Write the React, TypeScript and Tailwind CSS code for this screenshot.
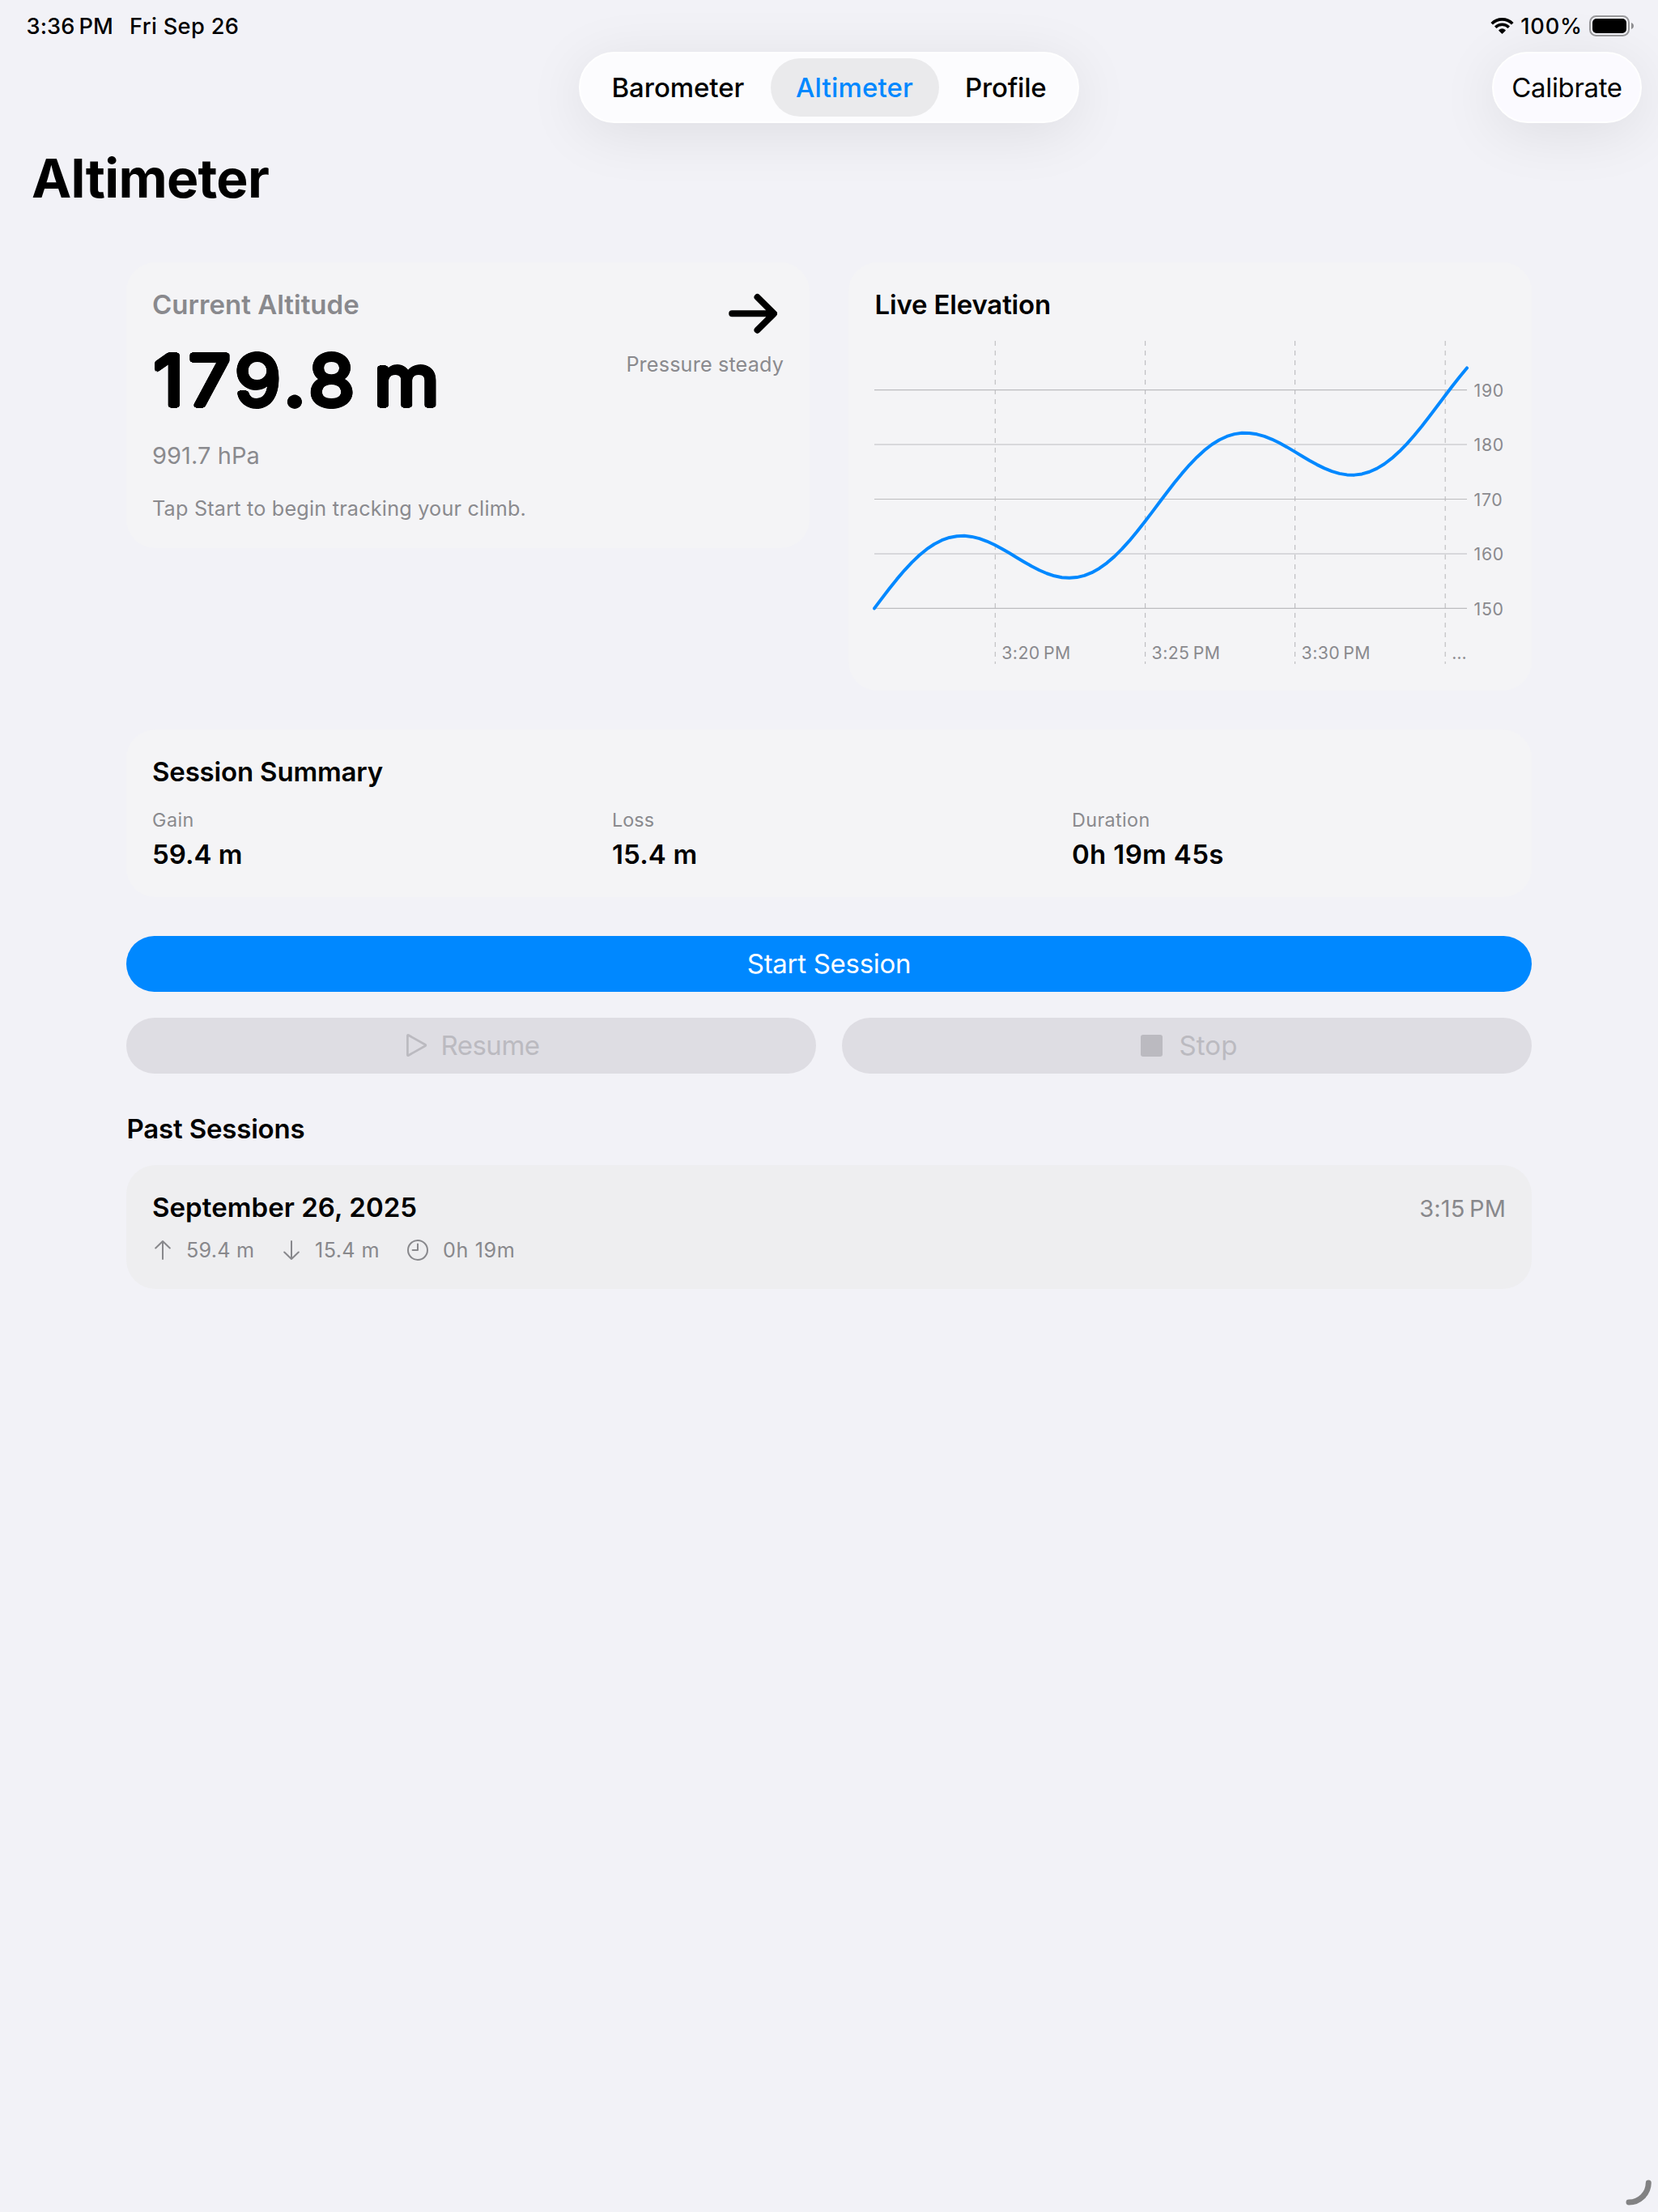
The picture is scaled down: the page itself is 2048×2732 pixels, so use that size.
import type { ReactNode } from "react";

/* Elevation samples, one every 15 seconds of the session. */
const SAMPLES = Array.from({ length: 80 }, (_, i) => 150 + 0.5 * i + 8 * Math.sin(i / 6));
const PLOT_W = 732;
const yFor = (v: number) => 330.4 - (v - 150) * 6.745;
const CURVE = SAMPLES.map(
  (v, i) => `${i ? "L" : "M"}${((i * PLOT_W) / 79).toFixed(2)} ${yFor(v).toFixed(2)}`,
).join(" ");

const TIME_TICKS: [number, string][] = [
  [149.3, "3:20\u202fPM"],
  [334.6, "3:25\u202fPM"],
  [519.6, "3:30\u202fPM"],
  [705.2, "…"],
];

function WifiIcon() {
  return (
    <svg width="29" height="20" viewBox="0 0 29 20" fill="none" stroke="#000">
      <path d="M1.7 7.2A18.2 18.2 0 0 1 27.3 7.2" strokeWidth="3.7" />
      <path d="M6.2 11.7A12 12 0 0 1 22.8 11.7" strokeWidth="3.5" />
      <path d="M14.5 19 L10.9 15.4 A5.3 5.3 0 0 1 18.1 15.4 Z" fill="#000" strokeWidth="1.4" strokeLinejoin="round" />
    </svg>
  );
}

function BatteryIcon() {
  return (
    <svg width="55" height="26" viewBox="0 0 55 26" fill="none">
      <rect x="1" y="1" width="48" height="24" rx="7.5" stroke="#99999c" strokeWidth="2" />
      <rect x="4" y="4" width="42" height="18" rx="5" fill="#000" />
      <path d="M52 9c1.9.7 3 2.2 3 4s-1.100 3.300-3 4z" fill="#8e8e91" />
    </svg>
  );
}

function StatusBar() {
  return (
    <div className="flex h-16 items-center justify-between pl-[32.5px] pr-[30px] text-[27.2px] font-medium">
      <div className="flex items-center pt-0.5">
        <span className="tracking-[0.15px]">3:36{"\u202f"}PM</span>
        <span className="ml-5 tracking-[0.35px]">Fri Sep 26</span>
      </div>
      <div className="flex items-center">
        <WifiIcon />
        <span className="ml-2 mr-2 pt-0.5 tracking-[0.87px]">100%</span>
        <BatteryIcon />
      </div>
    </div>
  );
}

function NavBar() {
  return (
    <div className="grid h-[88px] grid-cols-[1fr_auto_1fr] px-5 text-[33px]">
      <div />
      <div className="flex items-stretch rounded-full border-2 border-white bg-[#fcfcfe] p-1.5 font-medium shadow-[0_12px_72px_rgba(0,0,0,0.085)]">
        <div className="flex w-[229px] items-center pt-0.5 pl-[32.5px] tracking-[-0.05px]">Barometer</div>
        <div className="flex w-[208px] items-center justify-center rounded-full bg-[#eaeaec] pt-0.5 pr-px tracking-[0.18px] text-[#0088ff]">
          Altimeter
        </div>
        <div className="flex w-[165px] items-center pt-0.5 pl-8 tracking-[-0.2px]">Profile</div>
      </div>
      <div className="flex w-[185px] items-center justify-center justify-self-end rounded-full border-2 border-white bg-[#fbfaff] pt-0.5 tracking-[-0.35px] shadow-[0_12px_72px_rgba(0,0,0,0.085)]">
        Calibrate
      </div>
    </div>
  );
}

function CurrentAltitudeCard() {
  return (
    <section className="flex h-[353px] justify-between self-start rounded-[36px] bg-[#f4f4f6] p-8">
      <div>
        <h2 className="text-[33px] leading-[41px] font-semibold tracking-[0.02px] text-[#89898d]">Current Altitude</h2>
        <div className="mt-4 flex origin-left scale-x-[1.06] pl-[1.5px] text-[87px] leading-[114px] [text-shadow:2.7px_0_#000,2.49px_1.03px_#000,1.91px_1.91px_#000,1.03px_2.49px_#000,0_2.7px_#000,-1.03px_2.49px_#000,-1.91px_1.91px_#000,-2.49px_1.03px_#000,-2.7px_0_#000,-2.49px_-1.03px_#000,-1.91px_-1.91px_#000,-1.03px_-2.49px_#000,0_-2.7px_#000,1.03px_-2.49px_#000,1.91px_-1.91px_#000,2.49px_-1.03px_#000]">
          <span className="tracking-[5.4px]">
            179<span className="-ml-0.5 tracking-[3.6px]">.</span>8
          </span>
          <span className="ml-[17px]">m</span>
        </div>
        <p className="mt-[18px] text-[29px] leading-9 tracking-[0.07px] text-[#8a8a8e]">991.7 hPa</p>
        <p className="mt-8 text-[25.2px] leading-[31px] tracking-[0.21px] text-[#8a8a8e]">
          Tap Start to begin tracking your climb.
        </p>
      </div>
      <div className="flex flex-col items-end">
        <svg
          className="mt-1.5 mr-2"
          width="60"
          height="50"
          viewBox="0 0 60 50"
          fill="none"
          stroke="#000"
          strokeWidth="8"
          strokeLinecap="round"
          strokeLinejoin="round"
        >
          <path d="M4.200 25.300H55M35.500 5L56 25.300L35.500 45.700" />
        </svg>
        <p className="mt-[23px] text-[25.2px] leading-[31px] tracking-[0.16px] text-[#8a8a8e]">Pressure steady</p>
      </div>
    </section>
  );
}

function ElevationCard() {
  return (
    <section className="h-[529px] rounded-[36px] bg-[#f4f4f6] p-8">
      <h2 className="pl-[0.5px] text-[33px] leading-[41px] font-semibold tracking-[-0.18px]">Live Elevation</h2>
      <svg className="mt-6 overflow-visible" width="780" height="400" viewBox="0 0 780 400">
        {[150, 160, 170, 180, 190].map((v) => (
          <g key={v}>
            <line x1="0" x2={PLOT_W} y1={yFor(v)} y2={yFor(v)} stroke="#bcbcbf" strokeWidth="1.1" />
            <text x="740.6" y={yFor(v) + 8.3} fontSize="21.3" letterSpacing="0.65" fill="#8a8a8e">
              {v}
            </text>
          </g>
        ))}
        {TIME_TICKS.map(([x, label]) => (
          <g key={label}>
            <line x1={x} x2={x} y1="0" y2="399" stroke="#bcbcbf" strokeWidth="1.1" strokeDasharray="6 6" />
            <text x={x + 8} y="393" fontSize="21.3" letterSpacing="0.4" fill="#8a8a8e">
              {label}
            </text>
          </g>
        ))}
        <path d={CURVE} fill="none" stroke="#0088ff" strokeWidth="4" strokeLinecap="round" strokeLinejoin="round" />
      </svg>
    </section>
  );
}

function Stat({ label, children }: { label: ReactNode; children: ReactNode }) {
  return (
    <div>
      <div className="text-[23.3px] leading-7 text-[#8a8a8e]">{label}</div>
      <div className="mt-2 text-[33px] leading-[41px] font-semibold">{children}</div>
    </div>
  );
}

function SummaryCard() {
  return (
    <section className="mt-12 h-[207px] rounded-[36px] bg-[#f4f4f6] p-8">
      <h2 className="text-[33px] leading-[41px] font-semibold tracking-[-0.17px]">Session Summary</h2>
      <div className="mt-[25px] grid grid-cols-3 gap-8">
        <Stat label={<span className="tracking-[0.5px]">Gain</span>}>59.4 m</Stat>
        <Stat label={<span className="tracking-[0.1px]">Loss</span>}>
          <span className="tracking-[0.15px]">15.4 m</span>
        </Stat>
        <Stat label={<span className="tracking-[0.4px]">Duration</span>}>
          <span className="tracking-[0.35px]">0h 19m 45s</span>
        </Stat>
      </div>
    </section>
  );
}

function SessionControls() {
  return (
    <div className="mt-12 text-[33px] leading-[41px]">
      <button className="flex h-[69px] w-full items-center justify-center rounded-full bg-[#0088ff] pb-px tracking-[-0.3px] text-white">
        Start Session
      </button>
      <div className="mt-8 grid grid-cols-2 gap-8 text-[#bbbac0]">
        <button className="flex h-[69px] items-center justify-center rounded-full bg-[#dedde3] pb-px pl-1">
          <svg width="27" height="30" viewBox="0 0 27 30" fill="none" stroke="currentColor" strokeWidth="2.7" strokeLinejoin="round">
            <path d="M2.400 3.100Q2.400 1.900 3.500 2.500L24.300 14.200Q25.400 15 24.300 15.800L3.500 27.500Q2.400 28.100 2.400 26.900Z" />
          </svg>
          <span className="ml-4 tracking-[-0.5px]">Resume</span>
        </button>
        <button className="flex h-[69px] items-center justify-center rounded-full bg-[#dedde3] pb-px pl-[5px]">
          <span className="size-[27px] rounded-[3px] bg-[#bbbac0]" />
          <span className="ml-[21px] tracking-[0.05px]">Stop</span>
        </button>
      </div>
    </div>
  );
}

function PastSessions() {
  const stroke = {
    fill: "none",
    stroke: "currentColor",
    strokeWidth: 2,
    strokeLinecap: "round" as const,
    strokeLinejoin: "round" as const,
  };
  return (
    <section className="mt-12">
      <h2 className="pl-[0.5px] text-[33px] leading-[41px] font-semibold tracking-[-0.18px]">Past Sessions</h2>
      <div className="mt-6 h-[153px] rounded-[36px] bg-[#eeeef0] p-8">
        <div className="flex items-center justify-between">
          <h3 className="text-[33px] leading-[41px] font-semibold tracking-[0.06px]">September 26, 2025</h3>
          <span className="pt-0.5 text-[29px] leading-[39px] tracking-[0.14px] text-[#88888c]">3:15{"\u202f"}PM</span>
        </div>
        <div className="mt-4 flex pl-[3px] text-[25.2px] leading-[31px] text-[#88888c]">
          <div className="flex w-[159px] items-center">
            <svg width="20" height="26" viewBox="0 0 20 26" {...stroke}>
              <path d="M10 24V2M1.200 10.500L10 2L18.800 10.500" />
            </svg>
            <span className="ml-[19px] pt-0.5 leading-[29px] tracking-[0.22px]">59.4 m</span>
          </div>
          <div className="flex w-[153px] items-center">
            <svg width="20" height="26" viewBox="0 0 20 26" {...stroke}>
              <path d="M10 2V24M1.200 15.500L10 24L18.800 15.500" />
            </svg>
            <span className="ml-[19px] pt-0.5 leading-[29px] tracking-[0.4px]">15.4 m</span>
          </div>
          <div className="flex items-center">
            <svg width="26" height="26" viewBox="0 0 26 26" {...stroke}>
              <circle cx="13" cy="13" r="12" />
              <path d="M13 5.500V13H6.600" />
            </svg>
            <span className="ml-[18px] pt-0.5 leading-[29px] tracking-[0.6px]">0h 19m</span>
          </div>
        </div>
      </div>
    </section>
  );
}

export default function App() {
  return (
    <div className="relative h-[2732px] w-[2048px] overflow-hidden bg-[#f2f2f7] font-['Inter',sans-serif] whitespace-nowrap text-black">
      <StatusBar />
      <NavBar />
      <h1 className="mt-7 h-20 pl-[39px] text-[66px] leading-[80px] font-bold tracking-[-0.7px]">Altimeter</h1>
      <main className="mt-16 px-[156px]">
        <div className="grid grid-cols-2 gap-12">
          <CurrentAltitudeCard />
          <ElevationCard />
        </div>
        <SummaryCard />
        <SessionControls />
        <PastSessions />
      </main>
      <svg className="absolute right-2 bottom-2" width="32" height="32" viewBox="0 0 32 32" fill="none">
        <path d="M28.300 4A24.300 24.300 0 0 1 4 28" stroke="#828283" strokeWidth="7" strokeLinecap="round" />
      </svg>
    </div>
  );
}
